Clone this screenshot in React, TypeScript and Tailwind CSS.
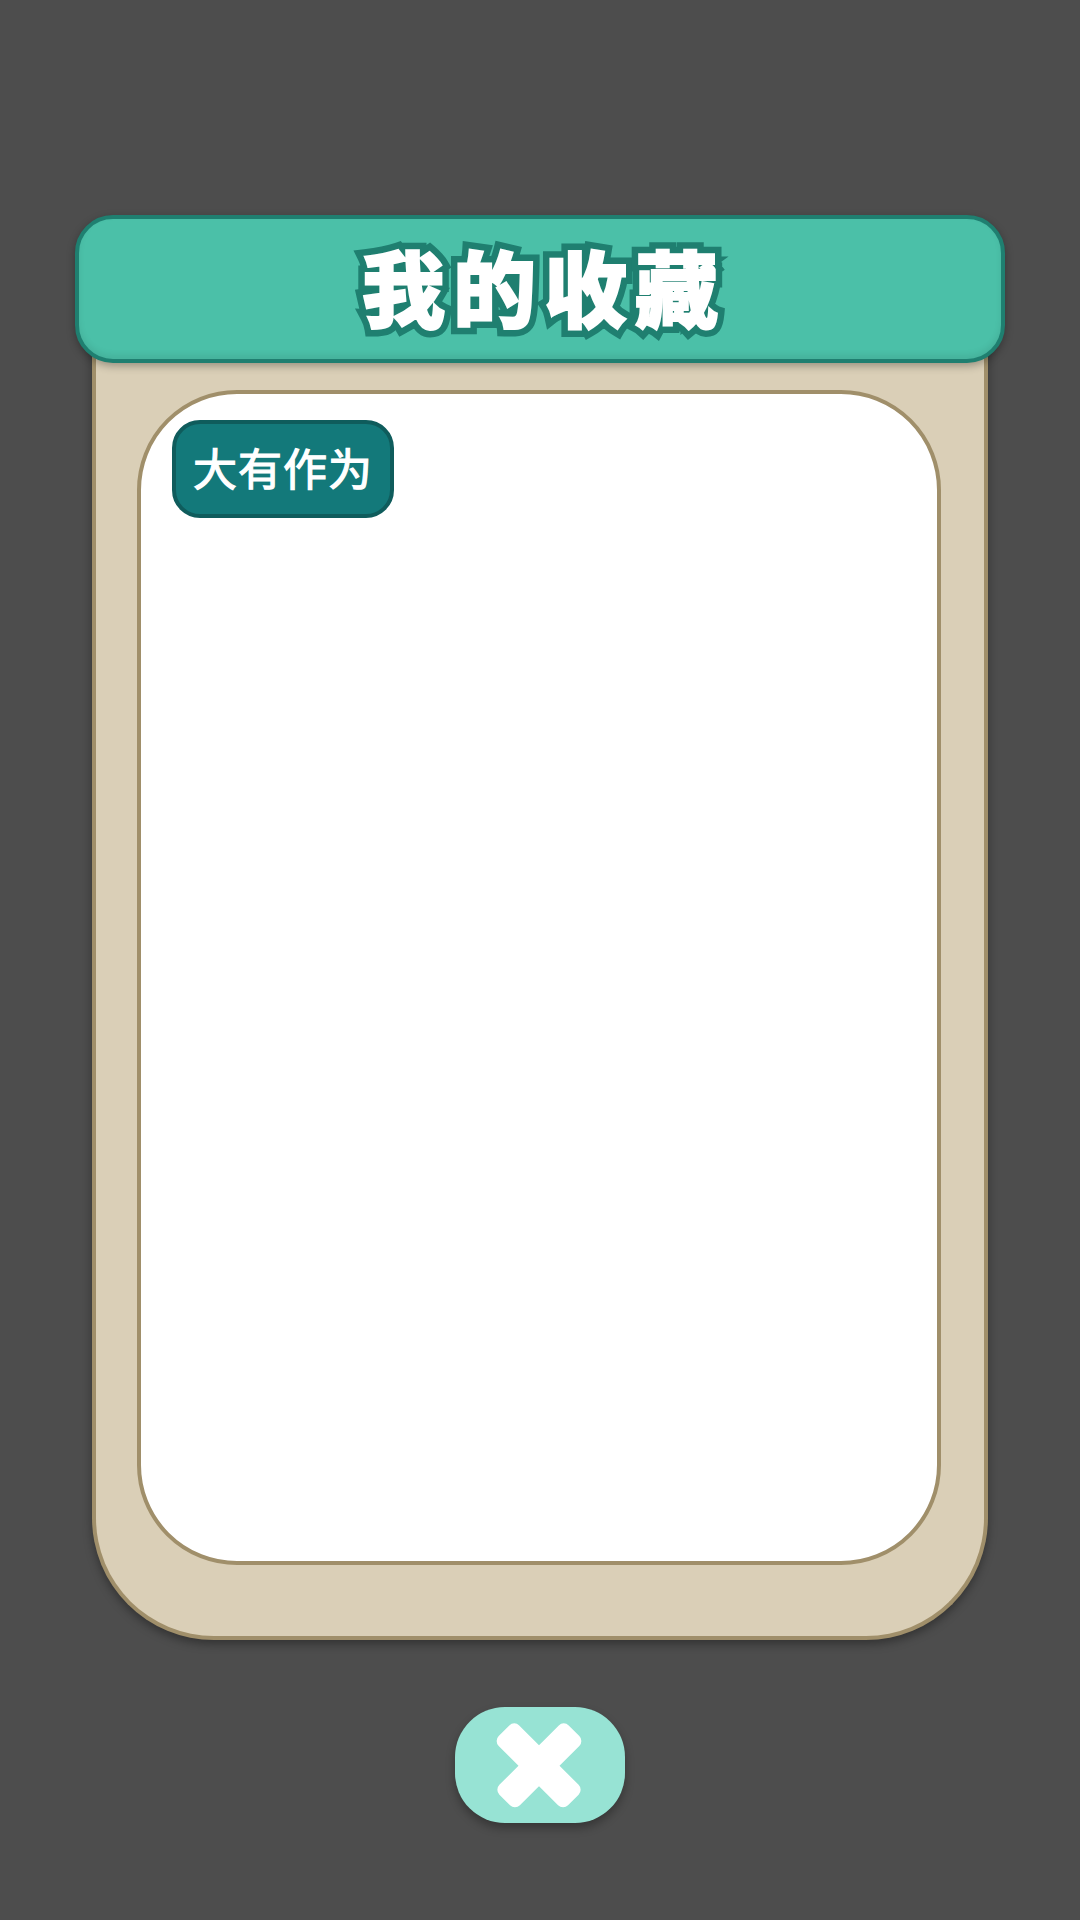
const cjk = "font-['Noto_Sans_CJK_SC','Noto_Sans',sans-serif]";

function CloseIcon() {
  return (
    <svg width="92" height="90" viewBox="0 0 92 90" fill="#fff">
      <rect x="-3" y="31" width="98" height="29" rx="7" transform="rotate(45 46 45)" />
      <rect x="-3" y="31" width="98" height="29" rx="7" transform="rotate(-45 46 45)" />
    </svg>
  );
}

export default function App() {
  return (
    <div className={`flex min-h-[1920px] w-[1080px] flex-col items-center bg-[#4d4d4d] pt-[215px] ${cjk}`}>
      {/* title bar sits on top of the panel */}
      <div className="relative z-10 flex h-[148px] w-[930px] items-center justify-center rounded-[38px] border-4 border-[#1f7f70] bg-[#4bc0a8] pb-[8px] shadow-[0_3px_8px_rgba(0,0,0,0.3),inset_0_-4px_6px_rgba(0,0,0,0.08)]">
        <div className="relative pl-[8px] text-[83px] leading-none font-black tracking-[8px] whitespace-nowrap">
          <span className="text-white [-webkit-text-stroke:15px_#1f7f70]">我的收藏</span>
          <span className="absolute top-0 left-[8px] text-white [-webkit-text-stroke:2px_#ffffff]">我的收藏</span>
        </div>
      </div>

      <div className="mt-[-40px] flex h-[1317px] w-[896px] flex-col rounded-b-[122px] border-4 border-t-0 border-[#a08f6a] bg-[#dacfb7] pt-[67px] pl-[41px] shadow-[0_4px_10px_rgba(0,0,0,0.35)]">
        <div className="h-[1175px] w-[804px] rounded-[100px] border-4 border-[#a08f6a] bg-white pt-[26px] pl-[31px]">
          <div className="flex h-[98px] w-[222px] items-center justify-center rounded-[28px] border-4 border-[#0f5c5c] bg-[#13797a] pb-[4px] text-[44px] font-normal tracking-[1px] text-white [-webkit-text-stroke:1.2px_#ffffff]">
            大有作为
          </div>
        </div>
      </div>

      <button
        type="button"
        className="mt-[67px] flex h-[116px] w-[170px] items-center justify-center rounded-[50px] bg-[#97e3d4] pr-[3px] shadow-[0_5px_10px_rgba(0,0,0,0.3)]"
      >
        <CloseIcon />
      </button>
    </div>
  );
}
